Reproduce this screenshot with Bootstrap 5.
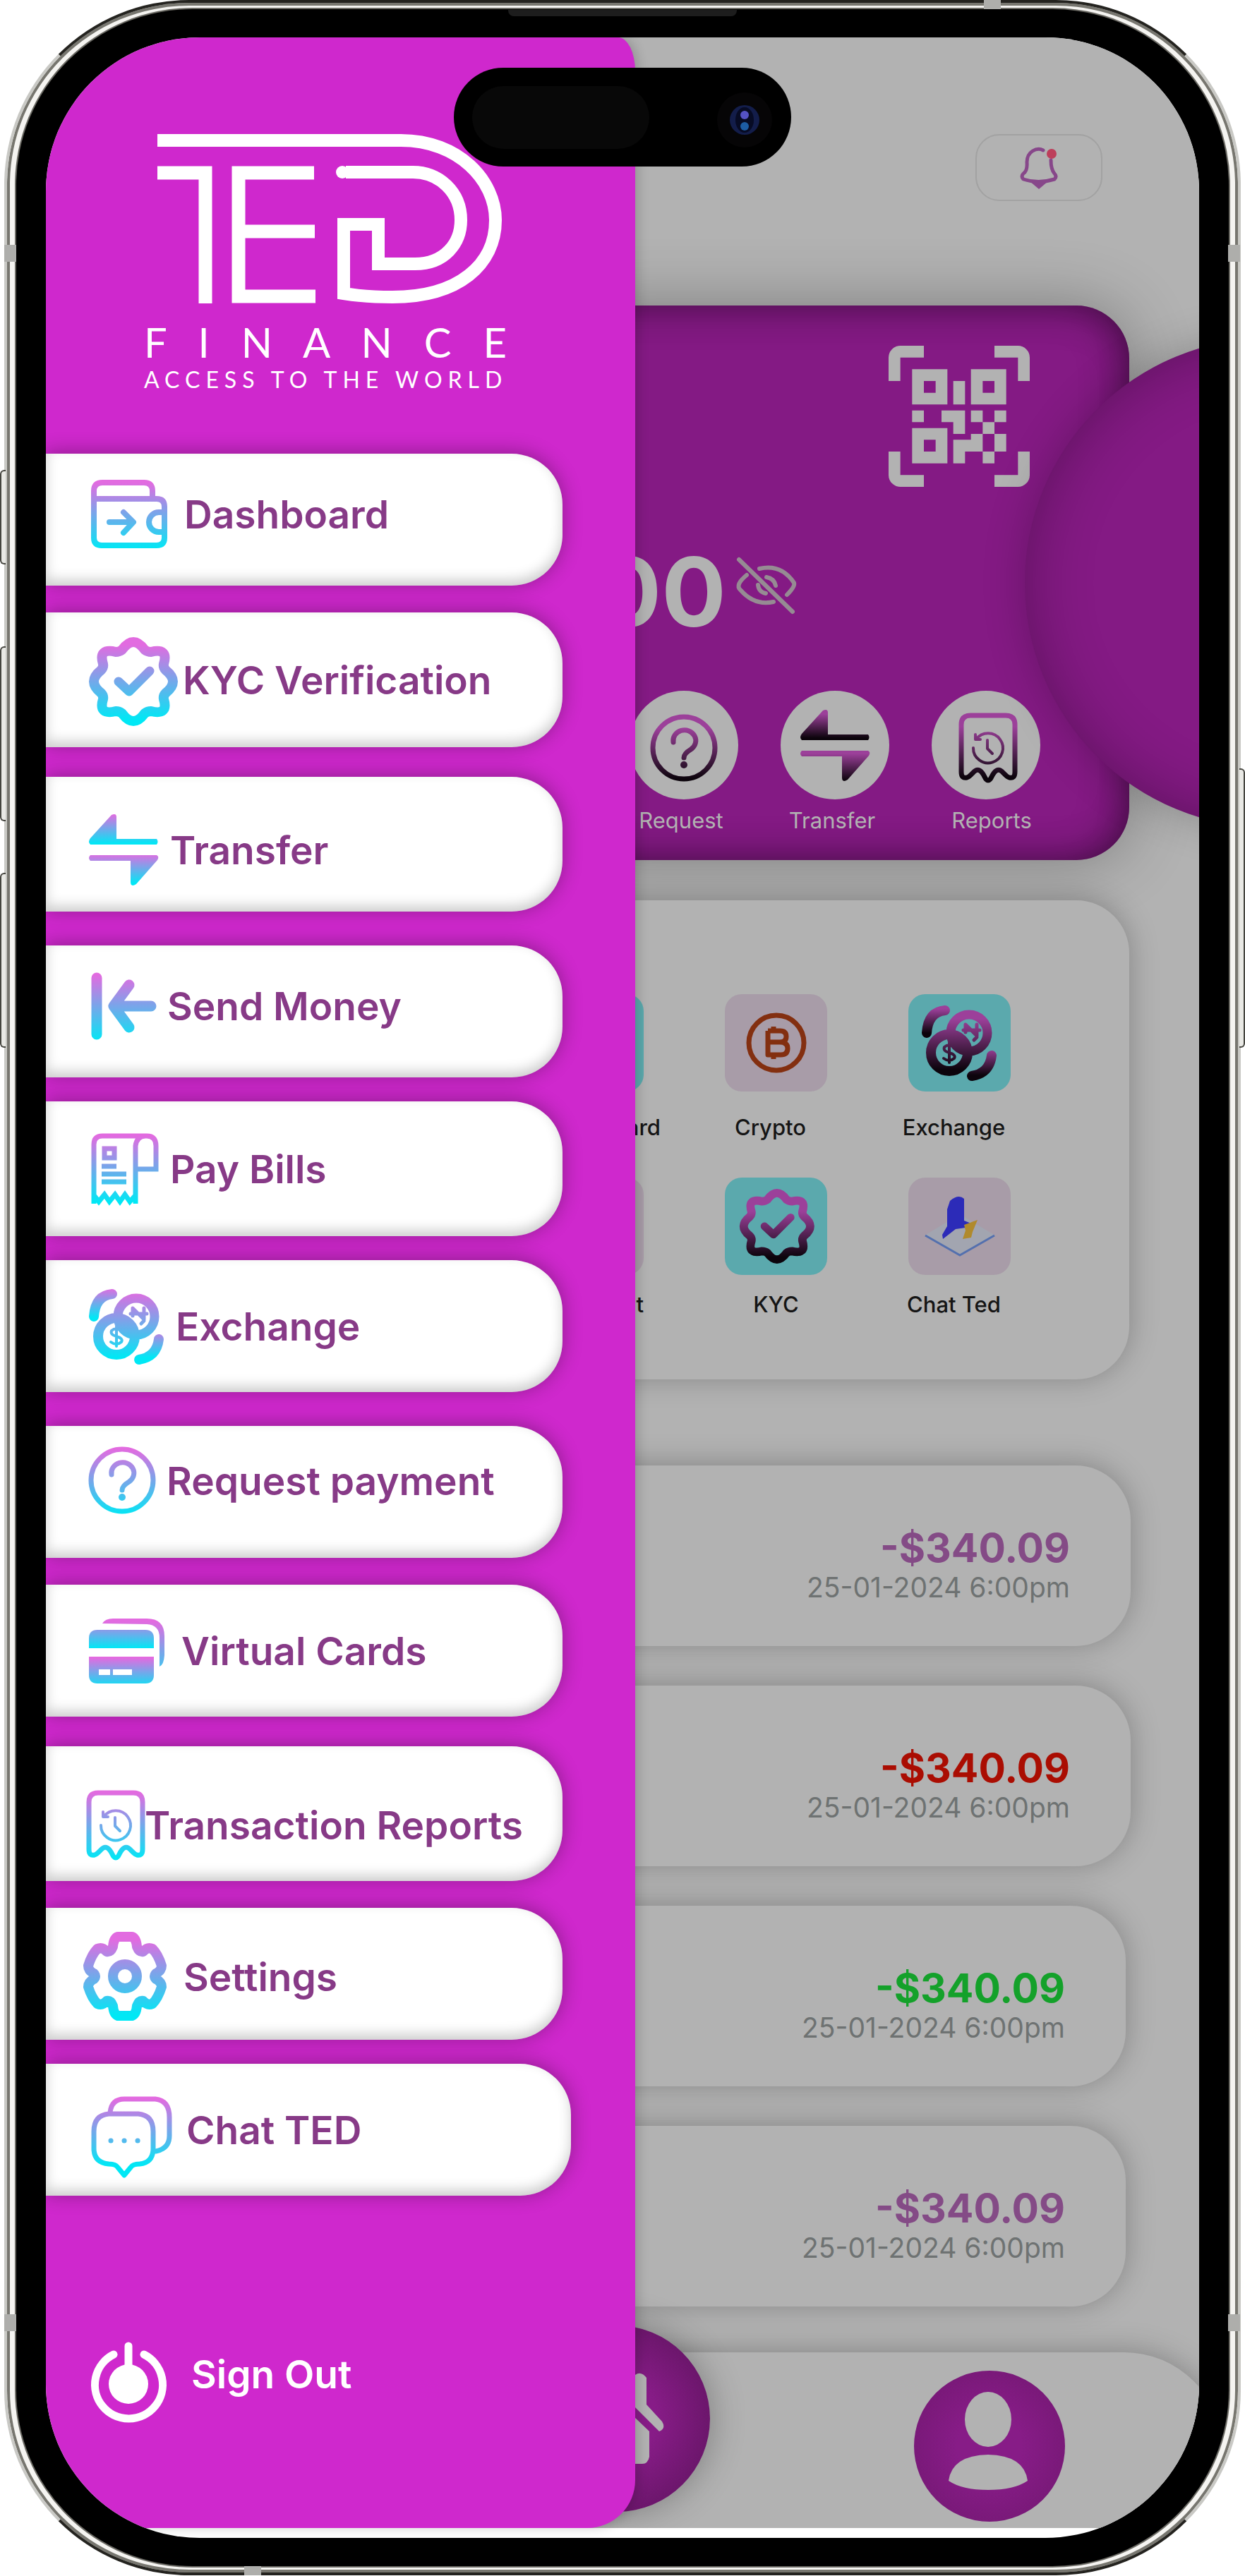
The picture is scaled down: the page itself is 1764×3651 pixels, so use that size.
<!DOCTYPE html>
<html lang="en">
<head>
<meta charset="utf-8">
<meta name="viewport" content="width=device-width, initial-scale=1">
<title>TED Finance</title>
<link rel="stylesheet" href="https://cdn.jsdelivr.net/npm/bootstrap@5.3.0/dist/css/bootstrap.min.css">
<style>
  :root { --brand: #cf28cd; --brand-dim: #841a84; --dim: #b2b2b2; --ink: #873a87; }
  body { font-family: Inter, "Open Sans", sans-serif; background: #fff; overflow-x: hidden; }
  svg { display: block; flex: none; overflow: visible; }
  a { text-decoration: none; }

  /* phone body */
  .phone { margin: 0 6px; border: 4px solid; border-color: #24231f #c9c9c5; border-radius: 262px; background: #f5f4f1; padding: 9px 13px; box-shadow: inset 0 0 0 4px #77766f; }
  .bezel { background: #000; border-radius: 250px; padding: 40px 42px; box-shadow: 0 0 0 2px #6b6a64; }
  .screen { background: #fff; border-radius: 218px; overflow: hidden; padding-bottom: 14px; }
  .hw { position: absolute; border: 2px solid #45453f; background: #e9e9e5; width: 8px; }
  .hw-l { left: 0; border-radius: 6px 0 0 6px; border-right: 0; }
  .hw-r { right: 0; border-radius: 0 6px 6px 0; border-left: 0; }
  .band { position: absolute; background: #aeaeab; width: 17px; height: 24px; }
  .band-h { width: 24px; height: 13px; }
  .speaker { position: absolute; top: 14px; width: 324px; height: 9px; background: #1d1d1d; border-radius: 0 0 8px 8px; }
  .island { top: 43px; width: 478px; height: 140px; border-radius: 70px; background: #000; z-index: 5; padding: 0 26px; }
  .island-pill { width: 251px; height: 89px; border-radius: 45px; background: #080808; }

  /* drawer */
  .drawer { width: 51.1%; background: var(--brand); border-radius: 0 24px 68px 0 / 0 48px 68px 0; z-index: 3; box-shadow: 4px 0 16px rgba(0,0,0,.18); padding: 137px 0 148px; }
  .brand-block { margin-left: 139px; width: 514px; margin-bottom: 89px; color: #fff; }
  .brand-name { font-family: Lato, sans-serif; font-size: 58px; line-height: 58px; text-align-last: justify; margin-top: 26px; font-weight: 400; }
  .brand-tag { font-family: Lato, sans-serif; font-size: 32px; line-height: 32px; margin-top: 8px; letter-spacing: 8px; white-space: nowrap; }
  .pill { width: 732px; height: 187px; padding-left: 53px; background: #fff; border-radius: 0 72px 72px 0; color: var(--ink); font-size: 55px; line-height: 60px; font-weight: 600; white-space: nowrap; box-shadow: 0 -2px 28px rgba(0,0,0,.32), inset 0 -8px 18px rgba(0,0,0,.2); }
  .pill-tall { height: 191px; }
  .pill-wide { width: 744px; }
  .sp-s { margin-top: 34px; } .sp-m { margin-top: 38px; } .sp-l { margin-top: 42px; } .sp-xl { margin-top: 48px; }
  .up { padding-bottom: 16px; } .up2 { padding-bottom: 32px; }
  .down { padding-top: 16px; } .down2 { padding-top: 32px; }
  .g-a { gap: 0; } .g-b { gap: 8px; } .g-c { gap: 16px; } .g-d { gap: 24px; }
  .sign { padding-left: 53px; margin-top: 207px; color: #fff; font-size: 55px; line-height: 60px; font-weight: 600; gap: 34px; }

  /* dimmed home page */
  .home { background: var(--dim); margin-left: -70px; padding-top: 137px; min-width: 0; overflow: hidden; }
  .bell { width: 180px; height: 95px; border: 2px solid #a2a2a2; border-radius: 34px; background: transparent; margin-right: 137px; padding: 0; }
  .balance { height: 786px; margin: 148px 99px 0 0; padding: 57px 0 0; border-radius: 0 75px 75px 0; background: var(--brand-dim); box-shadow: 0 0 90px rgba(0,0,0,.3), inset -20px 0 60px -10px rgba(0,0,0,.28), inset 0 20px 60px -20px rgba(0,0,0,.3), inset 0 -20px 60px -20px rgba(0,0,0,.3); color: var(--dim); }
  .scan { padding-right: 141px; }
  .orb { width: 694px; height: 694px; right: -447px; top: 426px; border-radius: 50%; background: var(--brand-dim); box-shadow: 0 0 60px rgba(0,0,0,.22), inset 0 0 90px rgba(0,0,0,.3); }
  .amount { font-size: 136px; line-height: 140px; font-weight: 700; margin-top: 79px; gap: 14px; padding-right: 471px; }
  .amount svg { margin-top: 20px; }
  .quick-acts { gap: 60px; padding-right: 126px; margin-top: 70px; }
  .act { width: 154px; font-size: 31px; line-height: 36px; color: var(--dim); gap: 12px; }
  .act-dot { width: 154px; height: 154px; border-radius: 50%; background: var(--dim); }
  .sheet { background: var(--dim); box-shadow: 0 -2px 40px rgba(0,0,0,.26); border-radius: 0 75px 75px 0; }
  .services { height: 679px; margin: 57px 99px 122px 0; padding: 133px 168px 0 0; }
  .svc-row { gap: 115px; height: 260px; }
  .svc { width: 145px; font-size: 31px; line-height: 36px; font-weight: 500; color: #151515; gap: 33px; white-space: nowrap; }
  .svc-row-b .svc { gap: 24px; }
  .svc-cut { margin-right: -24px; }
  .tile { width: 145px; height: 138px; border-radius: 24px; background: #a89ca8; }
  .tile-aqua { background: #5ba9ad; }
  .txn { height: 256px; margin: 0 97px 56px 0; padding: 89px 86px 0 0; border-radius: 0 78px 78px 0; }
  .txn-b { margin-right: 104px; }
  .sum { font-size: 57px; line-height: 56px; font-weight: 700; color: #844b86; }
  .sum-red { color: #aa0d02; }
  .sum-green { color: #14a12a; }
  .when { font-size: 39px; line-height: 44px; color: #6e7272; margin-top: 6px; }
  .tabs { height: 249px; margin: 65px -33px 0 0; padding-right: 223px; border-radius: 0 139px 0 0; position: relative; }
  .tab-dot { width: 214px; height: 214px; border-radius: 50%; background: radial-gradient(circle, #871c87 30%, #70176f 100%); }
  .home-dot { position: absolute; left: -88px; top: -38px; width: 264px; height: 264px; border-radius: 50%; background: radial-gradient(circle, #871c87 30%, #6b166b 72%); box-shadow: 0 0 50px rgba(0,0,0,.3); }

  /* gradients picked up by the shared symbols */
  .lite { --g: url(#l100); --gc: url(#lc); --g1: url(#l1); --g2: url(#l2); }
  .deep { --g: url(#d100); --gc: url(#dc); --g1: url(#d1); --g2: url(#d2); }
  .st { fill: none; stroke-linecap: round; stroke-linejoin: round; }
</style>
</head>
<body>
<svg width="0" height="0" class="position-absolute" aria-hidden="true">
  <defs>
    <linearGradient id="l100" gradientUnits="userSpaceOnUse" x1="0" y1="4" x2="0" y2="98"><stop offset="0" stop-color="#e26be0"/><stop offset="1" stop-color="#00e8f5"/></linearGradient>
    <linearGradient id="lc" gradientUnits="userSpaceOnUse" x1="0" y1="-52" x2="0" y2="54"><stop offset="0" stop-color="#e26be0"/><stop offset="1" stop-color="#00e8f5"/></linearGradient>
    <linearGradient id="l1" gradientUnits="userSpaceOnUse" x1="0" y1="0" x2="0" y2="42"><stop offset="0" stop-color="#e26be0"/><stop offset="1" stop-color="#00e8f5"/></linearGradient>
    <linearGradient id="l2" gradientUnits="userSpaceOnUse" x1="0" y1="56" x2="0" y2="98"><stop offset="0" stop-color="#e26be0"/><stop offset="1" stop-color="#00e8f5"/></linearGradient>
    <linearGradient id="d100" gradientUnits="userSpaceOnUse" x1="0" y1="20" x2="0" y2="92"><stop offset="0" stop-color="#9c409a"/><stop offset="1" stop-color="#0c040c"/></linearGradient>
    <linearGradient id="dc" gradientUnits="userSpaceOnUse" x1="0" y1="-25" x2="0" y2="52"><stop offset="0" stop-color="#9c409a"/><stop offset="1" stop-color="#0c040c"/></linearGradient>
    <linearGradient id="d1" gradientUnits="userSpaceOnUse" x1="0" y1="6" x2="0" y2="40"><stop offset="0" stop-color="#9c409a"/><stop offset="1" stop-color="#0c040c"/></linearGradient>
    <linearGradient id="d2" gradientUnits="userSpaceOnUse" x1="0" y1="62" x2="0" y2="100"><stop offset="0" stop-color="#9c409a"/><stop offset="1" stop-color="#0c040c"/></linearGradient>
    <g id="i-badge">
      <path class="st" stroke="var(--gc)" stroke-width="14" d="M-16-45Q0-67 16-45Q20-42 25-42Q50-48 43-25Q42-20 46-16Q66 0 46 16Q42 20 43 25Q50 48 25 42Q20 42 16 45Q0 67-16 45Q-20 42-25 42Q-50 48-43 25Q-42 20-46 16Q-66 0-46-16Q-42-20-43-25Q-50-48-25-42Q-20-42-16-45Z"/>
      <path class="st" stroke="var(--gc)" stroke-width="13" d="M-21 0L-6 14L23-15"/>
    </g>
    <g id="i-swap">
      <path fill="var(--g1)" d="M47 4V35H104Q107 39 104 43H10Q6 39 10 34L40 1Q47-2 47 4Z"/>
      <path fill="var(--g2)" d="M10 58H104Q108 60 105 65L75 99Q67 104 67 96V66H10Q6 62 10 58Z"/>
    </g>
    <g id="i-coins" class="st">
      <path stroke="var(--g1)" stroke-width="14" d="M15 40Q17 10 41 8"/>
      <path stroke="var(--g2)" stroke-width="14" d="M107 72Q104 97 79 101"/>
      <circle cx="75" cy="40" r="26" stroke="var(--g)" stroke-width="13"/>
      <circle cx="47" cy="68" r="26" stroke="var(--g)" stroke-width="14"/>
      <path stroke="var(--g)" stroke-width="5" d="M70 39V28L86 44V28M67 36H90M82 50L86 46"/>
      <path stroke="var(--g)" stroke-width="4" d="M55 61Q47 54 40 60Q38 66 47 68Q57 71 54 76Q47 82 39 76M47 54V82"/>
    </g>
    <g id="i-ask">
      <circle class="st" cx="55" cy="48" r="44" stroke="var(--g)" stroke-width="7"/>
      <path class="st" stroke="var(--g)" stroke-width="7" d="M40 40A16 15 0 1 1 65 50Q55 56 55 62"/>
      <circle cx="55" cy="72" r="5" fill="var(--g)"/>
    </g>
    <g id="i-report" class="st" stroke="var(--g)">
      <path stroke-width="7" d="M8 84V17Q8 4 21 4H71Q84 4 84 17V84Q84 94 76 92C69 90 65 78 58 82C51 86 51 96 46 96S41 86 34 82C27 78 23 90 16 92Q8 94 8 84Z"/>
      <path stroke-width="4" d="M29 38A21 21 0 1 1 25 50M28 31V38H35M45 39V51L52 58"/>
    </g>
  </defs>
</svg>

<div class="position-relative">
  <span class="hw hw-l" style="top:666px;height:134px"></span>
  <span class="hw hw-l" style="top:916px;height:248px"></span>
  <span class="hw hw-l" style="top:1237px;height:248px"></span>
  <span class="hw hw-r" style="top:1089px;height:396px"></span>

  <div class="phone">
    <div class="bezel">
      <main class="screen d-flex position-relative">

        <div class="island position-absolute start-50 translate-middle-x d-flex align-items-center justify-content-between">
          <span class="island-pill"></span>
          <svg width="80" height="80" viewBox="0 0 80 80" aria-hidden="true"><circle cx="40" cy="44" r="39" fill="#060506"/><circle cx="40" cy="44" r="21" fill="#131d4a"/><ellipse cx="40" cy="44" rx="13" ry="18" fill="#070b24"/><circle cx="40" cy="37" r="6" fill="#5552c4"/><circle cx="40" cy="53" r="6" fill="#1d5ca3"/></svg>
        </div>

        <nav class="drawer position-relative flex-shrink-0" aria-label="Main menu">
          <div class="brand-block">
            <svg width="512" height="240" viewBox="204 190 512 240" role="img" aria-label="TED"><path fill="none" stroke="#fff" stroke-width="18" d="M223 199H568C650 199 702 256 702 312C702 375 650 421 556 421Q518 421 487 416V318H536V374H588C630 374 653 345 653 312C653 272 622 244 585 244H490"/><circle cx="485" cy="244" r="9" fill="#fff"/><path fill="none" stroke="#fff" stroke-width="19" d="M223 245H291V430M445 245H338V420H447M338 328H446"/></svg>
            <div class="brand-name">F I N A N C E</div>
            <div class="brand-tag">ACCESS TO THE WORLD</div>
          </div>

          <a href="#" class="pill up g-d d-flex align-items-center"><svg class="lite" width="119" height="97"><g class="st" stroke="var(--g)" stroke-width="8"><path d="M15 27V16Q15 4 27 4H86Q98 4 98 16V27M15 27V82Q15 93 26 93H104Q115 93 115 82V38Q115 27 104 27H15"/><path d="M37 60H70M57 46L71 60L57 75M112 46H107A14 14 0 0 0 107 74H112"/></g></svg>Dashboard</a>
          <a href="#" class="pill pill-tall sp-m g-b d-flex align-items-center"><svg class="lite" width="133" height="127" viewBox="-71 -66 133 127"><use href="#i-badge"/></svg>KYC Verification</a>
          <a href="#" class="pill pill-tall sp-l down g-c d-flex align-items-center"><svg class="lite" width="107" height="101"><use href="#i-swap"/></svg>Transfer</a>
          <a href="#" class="pill sp-xl up g-c d-flex align-items-center"><svg class="lite" width="103" height="96"><path class="st" stroke="var(--g)" stroke-width="15" d="M19 8V88M96 48H44M65 18L43 48L65 78"/></svg>Send Money</a>
          <a href="#" class="pill pill-tall sp-s g-c d-flex align-items-center"><svg class="lite" width="107" height="102"><g fill="none" stroke="var(--g)" stroke-width="7"><path d="M15 100V16Q15 4 27 4H90Q103 4 103 18V51H74M74 100V18Q76 4 88 4M15 88L22 97L30 87L37 97L45 87L52 97L59 87L66 97L74 88"/><path d="M30 22H44V35H30ZM26 47H47M26 58H61M26 69H61"/></g></svg>Pay Bills</a>
          <a href="#" class="pill sp-s g-c d-flex align-items-center"><svg class="lite" width="115" height="108"><use href="#i-coins"/></svg>Exchange</a>
          <a href="#" class="pill sp-xl up2 g-c d-flex align-items-center"><svg class="lite" width="102" height="97"><use href="#i-ask"/></svg>Request payment</a>
          <a href="#" class="pill sp-m g-d d-flex align-items-center"><svg class="lite" width="115" height="92"><path fill="var(--g1)" d="M8 42V28Q8 16 20 16H88Q100 16 100 28V42Z"/><path fill="var(--g2)" fill-rule="evenodd" d="M8 54H100V80Q100 92 88 92H20Q8 92 8 80ZM22 72V80H38V72ZM42 72V80H69V72Z"/><path fill="var(--g)" d="M27 7Q31 0 42 0H90Q115 0 115 25V52Q114 66 108 68V27Q108 9 90 8Z"/></svg>Virtual Cards</a>
          <a href="#" class="pill pill-tall sp-l down2 g-a d-flex align-items-center"><svg class="lite" width="87" height="100"><use href="#i-report"/></svg>Transaction Reports</a>
          <a href="#" class="pill sp-m g-d d-flex align-items-center pt-2"><svg class="lite" width="118" height="127" viewBox="-59 -63 118 127"><g class="st" stroke="var(--gc)" stroke-width="14"><path d="M-10-56H10Q16-54 17-42Q20-34 26-35Q32-42 39-39Q47-31 52-15Q52-8 44-4Q40 0 44 4Q52 8 52 15Q47 31 39 39Q32 42 26 35Q20 34 17 42Q16 54 10 56H-10Q-16 54-17 42Q-20 34-26 35Q-32 42-39 39Q-47 31-52 15Q-52 8-44 4Q-40 0-44-4Q-52-8-52-15Q-47-31-39-39Q-32-42-26-35Q-20-34-17-42Q-16-54-10-56Z"/><circle r="17"/></g></svg>Settings</a>
          <a href="#" class="pill pill-wide sp-s g-c d-flex align-items-center"><svg class="lite" width="126" height="135" viewBox="0 -20 126 135"><g class="st" stroke="var(--g)" stroke-width="7"><path d="M38 23Q40 4 58 4H102Q122 6 122 30V56Q122 74 103 78M36 25H78Q99 27 99 50V74Q99 94 80 96Q70 96 67 101L58 112L49 101Q46 96 36 96Q15 94 15 74V50Q15 27 36 25Z"/><path d="M39 63H39.1M58 63H58.1M77 63H77.1"/></g></svg><span class="ps-1">Chat TED</span></a>

          <a href="#" class="sign d-flex align-items-center"><svg width="119" height="116" aria-hidden="true"><path class="st" stroke="#fff" stroke-width="11" d="M43 18A48 48 0 1 0 86 18M64 6V50"/><circle cx="64" cy="60" r="28" fill="#fff"/></svg><span class="pb-4">Sign Out</span></a>
        </nav>

        <section class="home flex-grow-1 position-relative">
          <div class="d-flex justify-content-end">
            <button type="button" class="bell d-flex align-items-center justify-content-center" aria-label="Notifications"><svg width="54" height="60" viewBox="0 0 54 60"><path class="st" stroke="#87478a" stroke-width="5" d="M33 5Q26 1 18 6Q10 11 10 22Q11 34 5 38Q1 42 5 46Q26 53 49 46Q53 42 49 38Q44 32 44 19"/><path fill="#87478a" d="M14 49H40L27 60Z"/><circle cx="45" cy="10" r="7" fill="#bd3f5b"/></svg></button>
          </div>

          <div class="balance">
            <div class="scan d-flex justify-content-end"><svg width="200" height="200" viewBox="0 0 24 24" fill="#b2b2b2" role="img" aria-label="Scan QR code"><path d="M4,4H10V10H4V4M20,4V10H14V4H20M14,15H16V13H14V11H16V13H18V11H20V13H18V15H20V18H18V20H16V18H13V20H11V16H14V15M16,15V18H18V15H16M4,20V14H10V20H4M6,6V8H8V6H6M16,6V8H18V6H16M6,16V18H8V16H6M4,11H6V13H4V11M9,11H13V15H11V13H9V11M11,6H13V10H11V6M2,2V6H0V2A2,2 0 0,1 2,0H6V2H2M22,0A2,2 0 0,1 24,2V6H22V2H18V0H22M2,18V22H6V24H2A2,2 0 0,1 0,22V18H2M22,22V18H24V22A2,2 0 0,1 22,24H18V22H22Z"/></svg></div>
            <div class="amount d-flex justify-content-end"><span>00</span><svg width="86" height="82" viewBox="0 0 86 82" role="img" aria-label="Hide balance"><g class="st" stroke="#968b93" stroke-width="6"><path d="M4 4L80 78M33 17Q64 10 82 37Q84 42 72 54M15 26Q-2 40 6 47Q26 70 53 64M43 29Q54 31 56 41M31 40Q32 50 42 52"/></g></svg></div>
            <div class="quick-acts d-flex justify-content-end">
              <a href="#" class="act d-flex flex-column align-items-center"><span class="act-dot d-flex align-items-center justify-content-center pe-2 pt-2"><svg class="deep" width="102" height="97"><use href="#i-ask"/></svg></span><span class="pe-2">Request</span></a>
              <a href="#" class="act d-flex flex-column align-items-center"><span class="act-dot d-flex align-items-center justify-content-center pe-2"><svg class="deep" width="107" height="101"><use href="#i-swap"/></svg></span><span class="pe-2">Transfer</span></a>
              <a href="#" class="act d-flex flex-column align-items-center"><span class="act-dot d-flex align-items-center justify-content-center pt-2"><svg class="deep" width="87" height="100"><use href="#i-report"/></svg></span><span class="ps-3">Reports</span></a>
            </div>
          </div>
          <span class="orb position-absolute"></span>

          <div class="sheet services">
            <div class="svc-row d-flex justify-content-end">
              <a href="#" class="svc d-flex flex-column align-items-end flex-shrink-0"><span class="tile tile-aqua"></span><span class="svc-cut">Card</span></a>
              <a href="#" class="svc d-flex flex-column align-items-center flex-shrink-0"><span class="tile d-flex align-items-center justify-content-center"><svg width="86" height="86" viewBox="0 0 86 86"><g fill="none" stroke="#832f10"><circle cx="43" cy="43" r="39" stroke-width="7"/><path stroke-width="7" stroke-linejoin="round" d="M31 26H48Q57 26 57 34Q57 42 48 42H31M48 42Q59 42 59 51Q59 60 49 60H31V26M39 20V26M39 60V66"/></g></svg></span><span class="pe-3">Crypto</span></a>
              <a href="#" class="svc d-flex flex-column align-items-center flex-shrink-0"><span class="tile tile-aqua d-flex align-items-center justify-content-center pe-2"><svg class="deep" width="115" height="108"><use href="#i-coins"/></svg></span><span class="pe-3">Exchange</span></a>
            </div>
            <div class="svc-row svc-row-b d-flex justify-content-end">
              <a href="#" class="svc d-flex flex-column align-items-end flex-shrink-0"><span class="tile"></span><span>ment</span></a>
              <a href="#" class="svc d-flex flex-column align-items-center flex-shrink-0"><span class="tile tile-aqua d-flex align-items-center justify-content-center"><svg class="deep" width="106" height="106" viewBox="-64 -63 126 126"><use href="#i-badge"/></svg></span>KYC</a>
              <a href="#" class="svc d-flex flex-column align-items-center flex-shrink-0"><span class="tile d-flex align-items-center justify-content-center"><svg width="100" height="84" viewBox="0 0 100 84"><path fill="#a2a5b0" d="M0 55L50 25L100 55L50 83Z"/><path fill="none" stroke="#5470ae" stroke-width="3" d="M1 55L50 83L99 55"/><path fill="#2c2bb8" d="M36 6Q48-4 56 3V34L66 38L58 44L44 46L26 60L25 54L32 42V18Z"/><path fill="#b08a2c" d="M56 40L75 33L68 50L66 58L54 60L58 48Z"/></svg></span><span class="pe-3">Chat Ted</span></a>
            </div>
          </div>

          <div class="sheet txn text-end"><div class="sum">-$340.09</div><div class="when">25-01-2024 6:00pm</div></div>
          <div class="sheet txn text-end"><div class="sum sum-red">-$340.09</div><div class="when">25-01-2024 6:00pm</div></div>
          <div class="sheet txn txn-b text-end"><div class="sum sum-green">-$340.09</div><div class="when">25-01-2024 6:00pm</div></div>
          <div class="sheet txn txn-b text-end mb-0"><div class="sum">-$340.09</div><div class="when">25-01-2024 6:00pm</div></div>

          <div class="sheet tabs d-flex align-items-center justify-content-end">
            <a href="#" class="home-dot" aria-label="Home"><svg width="264" height="264" viewBox="0 0 264 264"><path fill="#b2b2b2" d="M158 70q8-6 16 4v38l22 24q6 10-4 14l-60-60-60 60q-10-4-4-14l64-70 26 30z"/><path fill="#b2b2b2" d="M132 106L178 150V186Q176 196 168 196H96Q86 194 86 186V150Z"/></svg></a>
            <a href="#" class="tab-dot mt-3" aria-label="Profile"><svg width="214" height="214" viewBox="0 0 214 214" fill="#b2b2b2"><ellipse cx="105" cy="69" rx="33" ry="39"/><path d="M49 156Q54 120 105 119Q156 120 161 156Q142 169 105 169Q68 169 49 156Z"/></svg></a>
          </div>
        </section>
      </main>
    </div>
  </div>

  <span class="speaker start-50 translate-middle-x"></span>
  <span class="band" style="left:6px;top:347px"></span>
  <span class="band" style="right:7px;top:347px"></span>
  <span class="band" style="left:6px;bottom:346px"></span>
  <span class="band" style="right:7px;bottom:346px"></span>
  <span class="band band-h" style="left:79%;top:0"></span>
  <span class="band band-h" style="left:346px;bottom:0"></span>
</div>
<script src="https://cdn.jsdelivr.net/npm/bootstrap@5.3.0/dist/js/bootstrap.bundle.min.js"></script>
</body>
</html>
